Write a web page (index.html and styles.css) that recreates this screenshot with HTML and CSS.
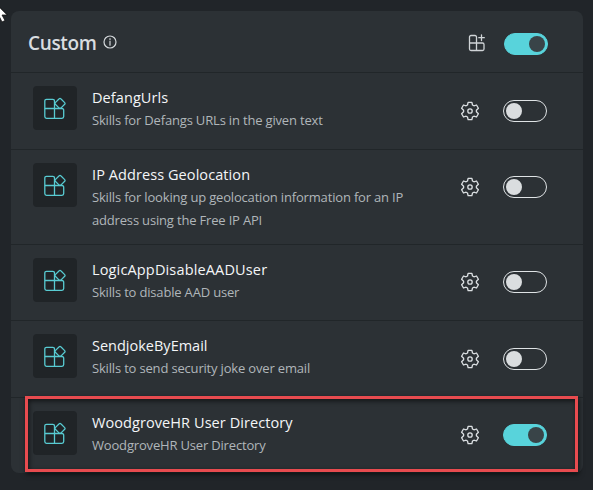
FILE: index.html
```
<!DOCTYPE html>
<html lang="en">
<head>
<meta charset="utf-8">
<title>Custom plugins</title>
<link rel="stylesheet" href="styles.css">
</head>
<body>
<svg class="defs" width="0" height="0" aria-hidden="true">
  <symbol id="blocks" viewBox="0 0 22 22">
    <path d="M10.500 11.500V4a1.700 1.700 0 0 0-1.700-1.700H2.500A1.700 1.700 0 0 0 .8 4v15.600a1.700 1.700 0 0 0 1.700 1.700H18a1.700 1.700 0 0 0 1.700-1.700v-6.400a1.700 1.700 0 0 0-1.700-1.700H.8M10.500 11.500v9.800"/>
    <path d="M15.200 1.700 11.300 5.600a1.100 1.100 0 0 0 0 1.600l3.900 3.900a1.100 1.100 0 0 0 1.600 0l3.900-3.900a1.100 1.100 0 0 0 0-1.600L16.800 1.700a1.100 1.100 0 0 0-1.600 0z"/>
  </symbol>
  <symbol id="gear" viewBox="0 0 20 20">
    <path d="M8.100 1.300h3.800l.6 2.700 1.400.8 2.600-.8 1.900 3.300-2 1.900v1.600l2 1.900-1.900 3.300-2.600-.8-1.400.8-.6 2.700H8.100L7.500 16l-1.400-.8-2.600.8-1.900-3.300 2-1.900V9.200l-2-1.900L3.500 4l2.600.8L7.500 4z"/>
    <circle cx="10" cy="10" r="2.200"/>
  </symbol>
</svg>
<main class="card">
  <header class="head">
    <h1>Custom</h1>
    <svg class="info" viewBox="0 0 14 14"><circle cx="7" cy="7" r="6"/><path d="M7 6.200v4M7 3.700v.8"/></svg>
    <svg class="add" viewBox="0 0 18 18"><path d="M8.500 9V3a1.500 1.500 0 0 0-1.500-1.500H3A1.500 1.500 0 0 0 1.500 3v12A1.500 1.500 0 0 0 3 16.500h11.500A1.500 1.500 0 0 0 16 15v-4.500A1.500 1.500 0 0 0 14.500 9h-13M8.500 9v7.500M13.500 1v5.500M10.800 3.700h5.500"/></svg>
    <span class="toggle on"></span>
  </header>
  <section class="row first">
    <span class="tile"><svg><use href="#blocks"/></svg></span>
    <div class="text"><h2>DefangUrls</h2><p>Skills for Defangs URLs in the given text</p></div>
    <svg class="gear"><use href="#gear"/></svg><span class="toggle"></span>
  </section>
  <section class="row tall">
    <span class="tile"><svg><use href="#blocks"/></svg></span>
    <div class="text"><h2>IP Address Geolocation</h2><p>Skills for looking up geolocation information for an IP<br>address using the Free IP API</p></div>
    <svg class="gear"><use href="#gear"/></svg><span class="toggle"></span>
  </section>
  <section class="row short">
    <span class="tile"><svg><use href="#blocks"/></svg></span>
    <div class="text"><h2 class="wide">LogicAppDisableAADUser</h2><p>Skills to disable AAD user</p></div>
    <svg class="gear"><use href="#gear"/></svg><span class="toggle"></span>
  </section>
  <section class="row joke">
    <span class="tile"><svg><use href="#blocks"/></svg></span>
    <div class="text"><h2>SendjokeByEmail</h2><p>Skills to send security joke over email</p></div>
    <svg class="gear"><use href="#gear"/></svg><span class="toggle"></span>
  </section>
  <section class="row short">
    <span class="tile"><svg><use href="#blocks"/></svg></span>
    <div class="text"><h2>WoodgroveHR User Directory</h2><p>WoodgroveHR User Directory</p></div>
    <svg class="gear"><use href="#gear"/></svg><span class="toggle on"></span>
  </section>
  <div class="highlight"></div>
</main>
<svg class="cursor" viewBox="0 0 8 24"><path d="M-5 3v17l4-4 3 6 3-1.500-3-5.500h5z"/></svg>
</body>
</html>
```
FILE: styles.css
```
* { box-sizing: border-box; }
body {
  margin: 0;
  padding: 11px 10px 0 11px;
  height: 490px;
  overflow: hidden;
  background: #212529;
  font-family: "Open Sans", "Noto Sans", sans-serif;
}
svg { fill: none; stroke-linejoin: round; stroke-linecap: round; flex: none; }
.defs { position: absolute; }
.card {
  position: relative;
  height: 462px;
  background: #2c3135;
  border-radius: 8px;
}
.head {
  display: flex;
  height: 61px;
  padding: 0 35px 0 17px;
}
h1 {
  margin: 19px 0 0;
  width: 75px;
  font-size: 19px;
  line-height: 27px;
  font-weight: 650;
  letter-spacing: -0.35px;
  color: #d9dde0;
}
.info { width: 14px; height: 14px; margin-top: 24px; stroke: #d4d8db; stroke-width: 1.2; }
.add { width: 18px; height: 18px; margin: 23px 18px 0 auto; stroke: #d0d4d7; stroke-width: 1.3; }
.toggle {
  flex: none;
  width: 44px;
  height: 22px;
  border: 1px solid #dfe3e5;
  border-radius: 11px;
  padding: 2px;
}
.toggle::before {
  content: "";
  display: block;
  width: 16px;
  height: 16px;
  border-radius: 50%;
  background: #dadddf;
}
.toggle.on { background: #58d3db; border-color: #58d3db; }
.toggle.on::before { margin-left: 22px; background: #394448; }
.head .toggle { margin-top: 22px; }
.row {
  display: flex;
  height: 77px;
  padding: 13px 36px 0 22px;
  border-top: 1px solid #212629;
}
.tall { height: 95px; }
.short { height: 76px; }
.tile {
  display: flex;
  align-items: center;
  justify-content: center;
  width: 44px;
  height: 44px;
  border-radius: 4px;
  background: #202427;
}
.tile svg { width: 22px; height: 22px; stroke: #58cbd2; stroke-width: 1.3; }
.text { margin-left: 15px; white-space: nowrap; }
h2, p { margin: 0; font-weight: 400; }
h2 { font-size: 14.5px; line-height: 24px; letter-spacing: .08px; color: #f4f6f8; }
h2.wide { letter-spacing: .15px; }
p { font-size: 13px; line-height: 23px; letter-spacing: -.175px; color: #b0b6ba; margin-top: -1px; }
.gear { width: 20px; height: 20px; margin: 14px 23px 0 auto; stroke: #dde1e4; stroke-width: 1.3; }
.row .toggle { margin-top: 13px; }
.first .gear, .joke .gear { margin-top: 15px; }
.first .toggle, .joke .toggle { margin-top: 14px; }
.joke h2 { letter-spacing: 0; }
.highlight {
  position: absolute;
  left: 14px;
  top: 385px;
  width: 553px;
  height: 76px;
  border: 3px solid #e84b4f;
  box-shadow: 1px 2px 5px rgba(0, 0, 0, .65), inset 1px 2px 5px rgba(0, 0, 0, .6);
}
.cursor { position: absolute; left: 0; top: 0; width: 8px; height: 24px; fill: #fff; stroke: #111; stroke-width: .8; }
```
